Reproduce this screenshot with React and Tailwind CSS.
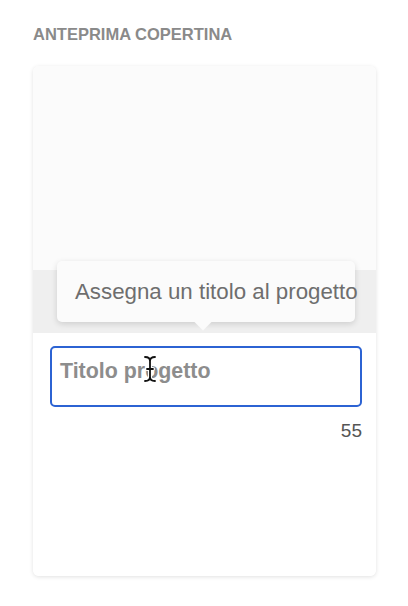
const IBeam = () => (
  <svg width="14" height="28" viewBox="0 0 14 28" className="absolute left-[91px] top-[7px]" fill="none">
    <path d="M2 2 Q7 2 7 6 Q7 2 12 2 M7 6 V22 M2 26 Q7 26 7 22 Q7 26 12 26 M4 14 H10" stroke="#fff" strokeWidth="4" strokeLinecap="round" />
    <path d="M2 2 Q7 2 7 6 Q7 2 12 2 M7 6 V22 M2 26 Q7 26 7 22 Q7 26 12 26 M4 14 H10" stroke="#111" strokeWidth="1.8" strokeLinecap="round" />
  </svg>
);

export default function App() {
  return (
    <div className="w-[408px] h-[606px] bg-white font-['Liberation_Sans',Arial,sans-serif] pt-[25px] px-[33px]">
      <h2 className="text-[16.5px] font-bold text-[#8a8a8a] leading-[19px]">ANTEPRIMA COPERTINA</h2>
      <div className="mt-[22px] w-[343px] h-[510px] rounded-[6px] bg-white shadow-[0_1px_4px_rgba(0,0,0,0.12)] overflow-hidden flex flex-col">
        <div className="h-[204px] bg-[#fbfbfb]" />
        <div className="relative h-[63px] bg-[#efefef]">
          <div className="absolute left-[24px] top-[-9px] w-[298px] h-[61px] rounded-[5px] bg-[#fbfbfb] shadow-[0_2px_6px_rgba(0,0,0,0.14)] flex items-center pl-[18px]">
            <span className="text-[22.3px] text-[#6e6e6e] whitespace-nowrap">Assegna un titolo al progetto</span>
            <div className="absolute left-[140px] bottom-[-6px] w-[12px] h-[12px] rotate-45 bg-[#fbfbfb]" />
          </div>
        </div>
        <div className="bg-white flex-1 pt-[13px] pl-[17px] pr-[14px]">
          <div className="relative h-[61px] rounded-[5px] border-2 border-[#2c63d3] flex items-center pl-[8px] pb-[11px]">
            <span className="text-[21.4px] font-bold text-[#8d8d8d]">Titolo progetto</span>
            <IBeam />
          </div>
          <div className="mt-[10px] text-right text-[19px] text-[#555]">55</div>
        </div>
      </div>
    </div>
  );
}
